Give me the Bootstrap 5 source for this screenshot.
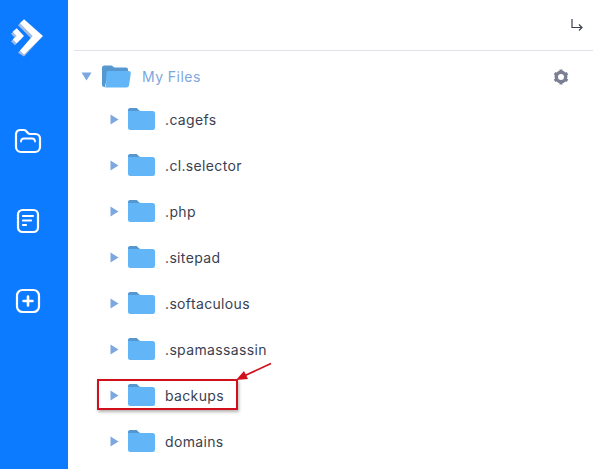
<!DOCTYPE html>
<html lang="en">
<head>
<meta charset="utf-8">
<title>My Files</title>
<link href="https://cdn.jsdelivr.net/npm/bootstrap@5.3.0/dist/css/bootstrap.min.css" rel="stylesheet">
<style>
html,body{height:469px;overflow:hidden;background:#fff}
body{font-family:"Inter","Open Sans",sans-serif;color:#3a3f52}
.shell{height:469px;position:relative}
.rail{width:68px;background:#0d7bff;flex:none;height:469px;padding-right:12px}
.rail-logo{height:76px;padding-top:17px}
.rail-item{height:46px;margin-top:34px}
.rail-logo + .rail-item{margin-top:42px}
.pane{flex:1;min-width:0;padding:0 7px 0 6px}
.head{height:51px;border-bottom:1px solid #dfe2e6;padding:0 9px 0 0}
.rootrow{height:45px;padding:6px 24px 0 7px}
.rootname{font-size:14px;color:#7da7dc;margin-left:11px;letter-spacing:.45px}
.tree-row{height:46px;padding-left:36px;font-size:14px;letter-spacing:.35px}
.tree-name{margin-left:10px}
.tri-d{margin-right:10px}
.tri-r{margin-right:9px}
.mark-box{position:absolute;left:97px;top:379px;width:141px;height:31px;border:2px solid #d0111b;box-shadow:1px 2px 3px rgba(0,0,0,.3);pointer-events:none}
.mark-arrow{position:absolute;left:232px;top:360px;pointer-events:none}
</style>
</head>
<body>
<div class="shell d-flex">
  <nav class="rail d-flex flex-column align-items-center">
    <div class="rail-logo">
      <svg width="34" height="40" viewBox="0 0 34 40">
        <path d="M11 4.300 30 21 13 39.500 7 35.700 19.700 21 7 8.300Z" fill="#9fbbe6"/>
        <path d="M4 13.300 11 21 4 28.300 0 24.300 4 21 0 16.700Z" fill="#9fbbe6"/>
        <path d="M13 2.300 32 19 13 37.500 9 33.700 21.700 19 9 6.300Z" fill="#fff"/>
        <path d="M5.700 11.300 13 19 5.700 26.300 1.700 22.300 5.700 19 1.700 14.700Z" fill="#fff"/>
      </svg>
    </div>
    <div class="rail-item d-flex align-items-center">
      <svg width="28" height="28" viewBox="0 0 28 28" fill="none" stroke="#fff" stroke-width="2.200" stroke-linejoin="round" stroke-linecap="round">
        <path d="M2 20V7A4.500 4.500 0 0 1 6.500 3H10C13 3 13 7 16 7H21.500A4.500 4.500 0 0 1 26 11.500V20A5 5 0 0 1 21 25H7A5 5 0 0 1 2 20Z"/>
        <path d="M7 14.500V14A3 3 0 0 1 10 11.500H18A3 3 0 0 1 21 14V14.500" stroke-width="1.800"/>
      </svg>
    </div>
    <div class="rail-item d-flex align-items-center">
      <svg width="24" height="28" viewBox="0 0 24 28" fill="none" stroke="#fff" stroke-width="2.200" stroke-linecap="round">
        <rect x="2" y="3" width="20" height="22" rx="4.500"/>
        <path d="M7 9H17M7 13.500H15M7 18H10"/>
      </svg>
    </div>
    <div class="rail-item d-flex align-items-center">
      <svg width="28" height="28" viewBox="0 0 28 28" fill="none" stroke="#fff" stroke-linecap="round">
        <rect x="3" y="3" width="22" height="22" rx="5.500" stroke-width="2.200"/>
        <path d="M14 9.500V18.500M9.500 14H18.500" stroke-width="2.600"/>
      </svg>
    </div>
  </nav>
  <main class="pane">
    <header class="head d-flex justify-content-end align-items-center">
      <svg width="14" height="14" viewBox="0 0 14 14" fill="none" stroke="#3d4150" stroke-width="1.200">
        <path d="M2 1V9.500H12M9 6.500 12 9.500 9 12.500"/>
      </svg>
    </header>
    <div class="rootrow d-flex align-items-center">
      <svg class="tri-d" width="11" height="9" viewBox="0 0 11 9"><path d="M.5.500H10.500L5.500 8.500Z" fill="#7da7e0"/></svg>
      <svg width="29" height="23" viewBox="0 0 29 23">
        <path d="M0 3A2.500 2.500 0 0 1 2.500 .5H9C11 .5 11 2.500 13 2.500H24A2 2 0 0 1 26 4.500V8H6L3 22H2.500A2.500 2.500 0 0 1 0 19.500Z" fill="#5598cf"/>
        <path d="M6 6H26.500A2.300 2.300 0 0 1 28.800 8.500L27 20.500A2.500 2.500 0 0 1 24.500 22.500H2.500A2 2 0 0 0 4 20.500L4.500 7.500A1.500 1.500 0 0 1 6 6Z" fill="#62b5f6"/>
      </svg>
      <span class="rootname">My Files</span>
      <svg class="ms-auto" width="16" height="16" viewBox="0 0 16 16">
        <circle cx="8" cy="8" r="4.700" fill="none" stroke="#7b7f93" stroke-width="3.400"/>
        <path d="M8 .5V3M8 13V15.500M1.500 4.250 3.700 5.500M12.300 10.500 14.500 11.750M1.500 11.750 3.700 10.500M12.300 5.500 14.500 4.250" stroke="#7b7f93" stroke-width="3"/>
      </svg>
    </div>
    <div class="tree-row d-flex align-items-center">
      <svg class="tri-r" width="9" height="11" viewBox="0 0 9 11"><path d="M.5.500V10.500L8.500 5.500Z" fill="#7da7e0"/></svg>
      <svg width="27" height="22" viewBox="0 0 27 22"><path d="M0 2.500A2.500 2.500 0 0 1 2.500 0H8C10 0 10 3 12.500 3H24.500A2.500 2.500 0 0 1 27 5.500V19.500A2.500 2.500 0 0 1 24.500 22H2.500A2.500 2.500 0 0 1 0 19.500Z" fill="#62b5f6"/><path d="M0 2.500A2.500 2.500 0 0 1 2.500 0H8C10 0 10 3 12.500 3H0Z" fill="#5598cf"/></svg>
      <span class="tree-name">.cagefs</span>
    </div>
    <div class="tree-row d-flex align-items-center">
      <svg class="tri-r" width="9" height="11" viewBox="0 0 9 11"><path d="M.5.500V10.500L8.500 5.500Z" fill="#7da7e0"/></svg>
      <svg width="27" height="22" viewBox="0 0 27 22"><path d="M0 2.500A2.500 2.500 0 0 1 2.500 0H8C10 0 10 3 12.500 3H24.500A2.500 2.500 0 0 1 27 5.500V19.500A2.500 2.500 0 0 1 24.500 22H2.500A2.500 2.500 0 0 1 0 19.500Z" fill="#62b5f6"/><path d="M0 2.500A2.500 2.500 0 0 1 2.500 0H8C10 0 10 3 12.500 3H0Z" fill="#5598cf"/></svg>
      <span class="tree-name">.cl.selector</span>
    </div>
    <div class="tree-row d-flex align-items-center">
      <svg class="tri-r" width="9" height="11" viewBox="0 0 9 11"><path d="M.5.500V10.500L8.500 5.500Z" fill="#7da7e0"/></svg>
      <svg width="27" height="22" viewBox="0 0 27 22"><path d="M0 2.500A2.500 2.500 0 0 1 2.500 0H8C10 0 10 3 12.500 3H24.500A2.500 2.500 0 0 1 27 5.500V19.500A2.500 2.500 0 0 1 24.500 22H2.500A2.500 2.500 0 0 1 0 19.500Z" fill="#62b5f6"/><path d="M0 2.500A2.500 2.500 0 0 1 2.500 0H8C10 0 10 3 12.500 3H0Z" fill="#5598cf"/></svg>
      <span class="tree-name">.php</span>
    </div>
    <div class="tree-row d-flex align-items-center">
      <svg class="tri-r" width="9" height="11" viewBox="0 0 9 11"><path d="M.5.500V10.500L8.500 5.500Z" fill="#7da7e0"/></svg>
      <svg width="27" height="22" viewBox="0 0 27 22"><path d="M0 2.500A2.500 2.500 0 0 1 2.500 0H8C10 0 10 3 12.500 3H24.500A2.500 2.500 0 0 1 27 5.500V19.500A2.500 2.500 0 0 1 24.500 22H2.500A2.500 2.500 0 0 1 0 19.500Z" fill="#62b5f6"/><path d="M0 2.500A2.500 2.500 0 0 1 2.500 0H8C10 0 10 3 12.500 3H0Z" fill="#5598cf"/></svg>
      <span class="tree-name">.sitepad</span>
    </div>
    <div class="tree-row d-flex align-items-center">
      <svg class="tri-r" width="9" height="11" viewBox="0 0 9 11"><path d="M.5.500V10.500L8.500 5.500Z" fill="#7da7e0"/></svg>
      <svg width="27" height="22" viewBox="0 0 27 22"><path d="M0 2.500A2.500 2.500 0 0 1 2.500 0H8C10 0 10 3 12.500 3H24.500A2.500 2.500 0 0 1 27 5.500V19.500A2.500 2.500 0 0 1 24.500 22H2.500A2.500 2.500 0 0 1 0 19.500Z" fill="#62b5f6"/><path d="M0 2.500A2.500 2.500 0 0 1 2.500 0H8C10 0 10 3 12.500 3H0Z" fill="#5598cf"/></svg>
      <span class="tree-name">.softaculous</span>
    </div>
    <div class="tree-row d-flex align-items-center">
      <svg class="tri-r" width="9" height="11" viewBox="0 0 9 11"><path d="M.5.500V10.500L8.500 5.500Z" fill="#7da7e0"/></svg>
      <svg width="27" height="22" viewBox="0 0 27 22"><path d="M0 2.500A2.500 2.500 0 0 1 2.500 0H8C10 0 10 3 12.500 3H24.500A2.500 2.500 0 0 1 27 5.500V19.500A2.500 2.500 0 0 1 24.500 22H2.500A2.500 2.500 0 0 1 0 19.500Z" fill="#62b5f6"/><path d="M0 2.500A2.500 2.500 0 0 1 2.500 0H8C10 0 10 3 12.500 3H0Z" fill="#5598cf"/></svg>
      <span class="tree-name">.spamassassin</span>
    </div>
    <div class="tree-row d-flex align-items-center">
      <svg class="tri-r" width="9" height="11" viewBox="0 0 9 11"><path d="M.5.500V10.500L8.500 5.500Z" fill="#7da7e0"/></svg>
      <svg width="27" height="22" viewBox="0 0 27 22"><path d="M0 2.500A2.500 2.500 0 0 1 2.500 0H8C10 0 10 3 12.500 3H24.500A2.500 2.500 0 0 1 27 5.500V19.500A2.500 2.500 0 0 1 24.500 22H2.500A2.500 2.500 0 0 1 0 19.500Z" fill="#62b5f6"/><path d="M0 2.500A2.500 2.500 0 0 1 2.500 0H8C10 0 10 3 12.500 3H0Z" fill="#5598cf"/></svg>
      <span class="tree-name">backups</span>
    </div>
    <div class="tree-row d-flex align-items-center">
      <svg class="tri-r" width="9" height="11" viewBox="0 0 9 11"><path d="M.5.500V10.500L8.500 5.500Z" fill="#7da7e0"/></svg>
      <svg width="27" height="22" viewBox="0 0 27 22"><path d="M0 2.500A2.500 2.500 0 0 1 2.500 0H8C10 0 10 3 12.500 3H24.500A2.500 2.500 0 0 1 27 5.500V19.500A2.500 2.500 0 0 1 24.500 22H2.500A2.500 2.500 0 0 1 0 19.500Z" fill="#62b5f6"/><path d="M0 2.500A2.500 2.500 0 0 1 2.500 0H8C10 0 10 3 12.500 3H0Z" fill="#5598cf"/></svg>
      <span class="tree-name">domains</span>
    </div>
  </main>
  <div class="mark-box"></div>
  <svg class="mark-arrow" width="44" height="24" viewBox="0 0 44 24">
    <path d="M39 3.500 12 16" stroke="#d0111b" stroke-width="1.800"/>
    <path d="M4 20 12 11 16 19Z" fill="#d0111b"/>
  </svg>
</div>
<script src="https://cdn.jsdelivr.net/npm/bootstrap@5.3.0/dist/js/bootstrap.bundle.min.js"></script>
</body>
</html>
